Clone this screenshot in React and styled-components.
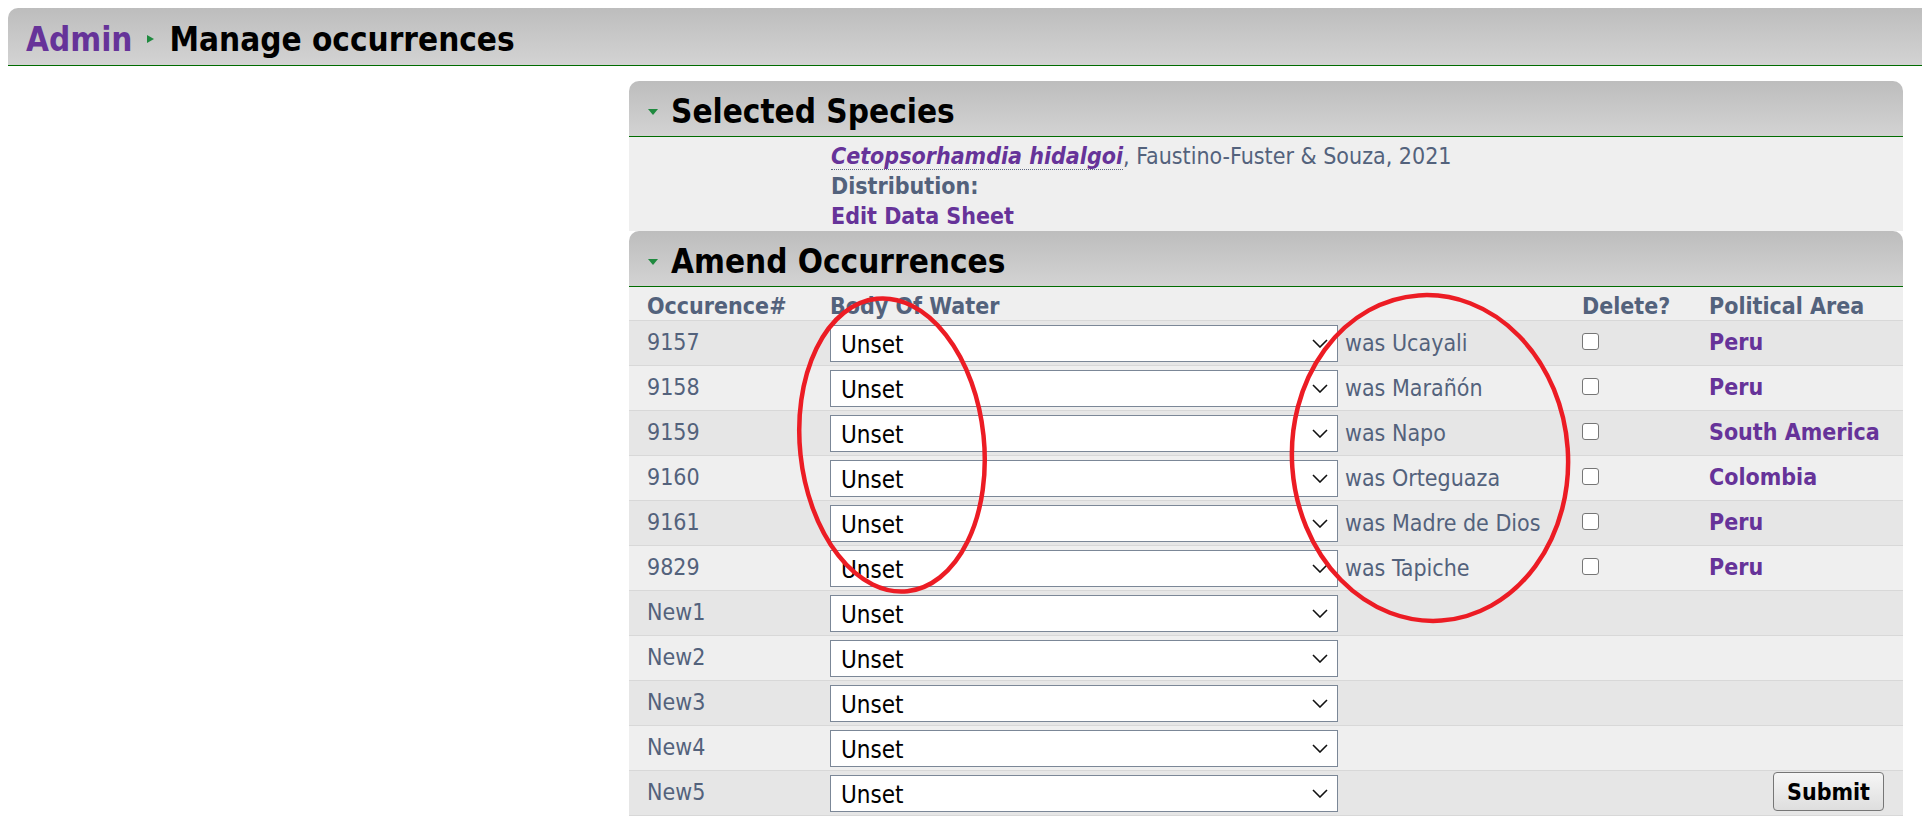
import React from 'react'
import styled, { createGlobalStyle, css } from 'styled-components'

const sans = `"DejaVu Sans Condensed", "DejaVu Sans", Verdana, sans-serif`
const purple = '#663399'
const slate = '#53627c'
const green = '#1f8a3f'

const GlobalStyle = createGlobalStyle`
  html, body {
    margin: 0;
    background: #fff;
  }

  body {
    font-family: ${sans};
    font-stretch: condensed;
    color: ${slate};
  }
`

const Page = styled.div`
  position: relative;
  padding: 8px 0 0 8px;
  min-height: 100vh;
  box-sizing: border-box;
  overflow: hidden;
`

const barGradient = css`
  background: linear-gradient(#bdbdbd, #d3d3d3);
  border-bottom: 1px solid #006c00;
`

const TopBar = styled.header`
  display: flex;
  align-items: center;
  height: 58px;
  box-sizing: border-box;
  padding: 5px 0 0 18px;
  border-top-left-radius: 10px;
  font-size: 33px;
  font-weight: bold;
  ${barGradient}
`

const Crumb = styled.a`
  color: ${purple};
  text-decoration: none;
`

const CrumbArrow = styled.span`
  width: 0;
  height: 0;
  margin: 0 15px;
  border-left: 7px solid ${green};
  border-top: 4.5px solid transparent;
  border-bottom: 4.5px solid transparent;
`

const Title = styled.h1`
  margin: 0;
  font-size: inherit;
  color: #000;
`

const Layout = styled.div`
  display: grid;
  grid-template-columns: 621px 1274px;
  margin-top: 15px;
`

const Main = styled.main`
  grid-column: 2;
`

const PanelHeader = styled.div`
  display: flex;
  align-items: center;
  height: 56px;
  box-sizing: border-box;
  padding: 6px 0 0 19px;
  border-radius: 10px 10px 0 0;
  ${barGradient}
`

const Toggle = styled.span`
  width: 0;
  height: 0;
  margin-right: 13px;
  border-top: 6px solid ${green};
  border-left: 5px solid transparent;
  border-right: 5px solid transparent;
`

const PanelTitle = styled.h2`
  margin: 0;
  font-size: 33px;
  font-weight: bold;
  color: #000;
`

const SpeciesBody = styled.div`
  background: #efefef;
  padding: 4px 0 0 202px;
  font-size: 23px;
  line-height: 30px;
`

const SpeciesLine = styled.div`
  color: ${({ $link }) => ($link ? purple : slate)};
  font-weight: ${({ $plain }) => ($plain ? 'normal' : 'bold')};
`

const SpeciesName = styled.a`
  color: ${purple};
  font-style: italic;
  font-weight: bold;
  text-decoration: none;
  border-bottom: 1px dotted #5d6680;
`

const Authority = styled.span`
  font-weight: normal;
  color: ${slate};
`

const Row = styled.div`
  display: grid;
  grid-template-columns: 183px 752px 127px 212px;
  background: ${({ $dark }) => ($dark ? '#e6e6e6' : '#efefef')};
  border-bottom: 1px solid #d8d8d8;
  font-size: 23px;
  line-height: 28px;
`

const HeadCell = styled.div`
  padding: 5px 0 0 18px;
  font-weight: bold;
  color: ${slate};
`

const Cell = styled.div`
  display: flex;
  align-items: flex-start;
  padding: 4px 0 3px 18px;
  min-width: 0;
  ${({ $end }) => $end && css`
    justify-content: flex-end;
    padding-right: 19px;
  `}
`

const CellText = styled.span`
  margin-top: 3px;
  white-space: nowrap;
`

const SelectWrap = styled.div`
  position: relative;
  width: 508px;
  height: 37px;
  flex: none;
`

const Select = styled.select`
  appearance: none;
  width: 100%;
  height: 100%;
  box-sizing: border-box;
  padding: 3px 40px 0 10px;
  border: 1px solid #7b8797;
  border-radius: 0;
  background: #fff;
  font-family: ${sans};
  font-stretch: condensed;
  font-size: 24px;
  color: #000;
`

const Chevron = styled.svg`
  position: absolute;
  right: 10px;
  top: 14px;
  width: 16px;
  height: 9px;
  pointer-events: none;
`

const WasText = styled.span`
  margin: 4px 0 0 7px;
  white-space: nowrap;
  color: ${slate};
`

const Check = styled.input`
  appearance: none;
  -webkit-appearance: none;
  flex: none;
  width: 17px;
  height: 17px;
  margin: 8px 0 0;
  border: 1.5px solid #767676;
  border-radius: 3px;
  background: #fff;
`

const AreaLink = styled.a`
  margin-top: 3px;
  color: ${purple};
  font-weight: bold;
  text-decoration: none;
  white-space: nowrap;
`

const SubmitButton = styled.button`
  height: 39px;
  margin-top: -3px;
  padding: 0 13px;
  border: 1px solid #767676;
  border-radius: 4px;
  background: linear-gradient(#f6f6f6, #dedede);
  font-family: ${sans};
  font-stretch: condensed;
  font-size: 23px;
  font-weight: bold;
  color: #000;
`

const Marks = styled.svg`
  position: absolute;
  left: 0;
  top: 0;
  width: 100%;
  height: 100%;
  pointer-events: none;
`

const occurrences = [
  { id: '9157', was: 'Ucayali', area: 'Peru' },
  { id: '9158', was: 'Marañón', area: 'Peru' },
  { id: '9159', was: 'Napo', area: 'South America' },
  { id: '9160', was: 'Orteguaza', area: 'Colombia' },
  { id: '9161', was: 'Madre de Dios', area: 'Peru' },
  { id: '9829', was: 'Tapiche', area: 'Peru' },
  { id: 'New1' },
  { id: 'New2' },
  { id: 'New3' },
  { id: 'New4' },
  { id: 'New5', submit: true }
]

const WaterSelect = () => (
  <SelectWrap>
    <Select defaultValue='unset'>
      <option value='unset'>Unset</option>
    </Select>
    <Chevron viewBox='0 0 16 9'>
      <path d='M1 1 L8 8 L15 1' fill='none' stroke='#111' strokeWidth='1.6' />
    </Chevron>
  </SelectWrap>
)

const OccurrenceRow = ({ item, dark }) => (
  <Row $dark={dark}>
    <Cell><CellText>{item.id}</CellText></Cell>
    <Cell>
      <WaterSelect />
      {item.was && <WasText>was {item.was}</WasText>}
    </Cell>
    <Cell>{item.area && <Check type='checkbox' />}</Cell>
    <Cell $end={item.submit}>
      {item.area && <AreaLink href='#'>{item.area}</AreaLink>}
      {item.submit && <SubmitButton type='submit'>Submit</SubmitButton>}
    </Cell>
  </Row>
)

const App = () => (
  <Page>
    <GlobalStyle />
    <TopBar>
      <Crumb href='#'>Admin</Crumb>
      <CrumbArrow />
      <Title>Manage occurrences</Title>
    </TopBar>
    <Layout>
      <Main>
        <PanelHeader>
          <Toggle />
          <PanelTitle>Selected Species</PanelTitle>
        </PanelHeader>
        <SpeciesBody>
          <SpeciesLine $plain>
            <SpeciesName href='#'>Cetopsorhamdia hidalgoi</SpeciesName>
            <Authority>, Faustino-Fuster &amp; Souza, 2021</Authority>
          </SpeciesLine>
          <SpeciesLine>Distribution:</SpeciesLine>
          <SpeciesLine $link>Edit Data Sheet</SpeciesLine>
        </SpeciesBody>
        <PanelHeader>
          <Toggle />
          <PanelTitle>Amend Occurrences</PanelTitle>
        </PanelHeader>
        <form onSubmit={e => e.preventDefault()}>
          <Row>
            <HeadCell>Occurence#</HeadCell>
            <HeadCell>Body Of Water</HeadCell>
            <HeadCell>Delete?</HeadCell>
            <HeadCell>Political Area</HeadCell>
          </Row>
          {occurrences.map((item, i) => (
            <OccurrenceRow key={item.id} item={item} dark={i % 2 === 0} />
          ))}
        </form>
      </Main>
    </Layout>
    <Marks>
      <ellipse cx='892' cy='445' rx='92' ry='147' fill='none' stroke='#ec1c24' strokeWidth='4.5' transform='rotate(-6 892 445)' />
      <ellipse cx='1430' cy='458' rx='138' ry='163' fill='none' stroke='#ec1c24' strokeWidth='4.5' transform='rotate(-4 1430 458)' />
    </Marks>
  </Page>
)

export default App
